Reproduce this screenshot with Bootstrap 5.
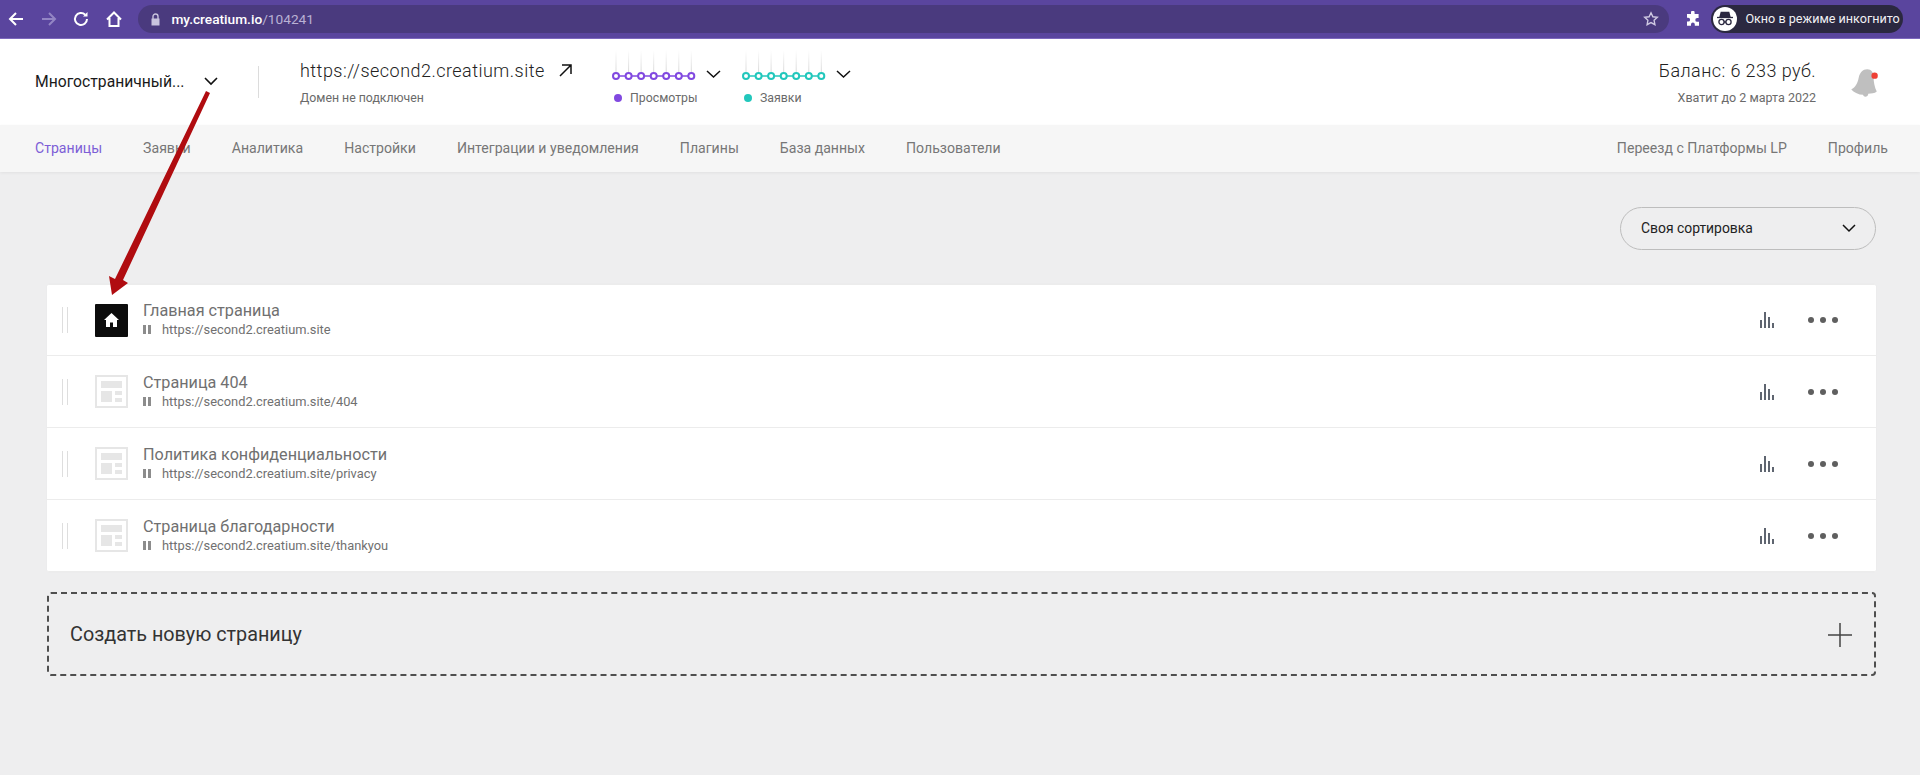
<!DOCTYPE html>
<html lang="ru">
<head>
<meta charset="utf-8">
<title>Страницы</title>
<link href="https://cdn.jsdelivr.net/npm/bootstrap@5.3.0/dist/css/bootstrap.min.css" rel="stylesheet">
<style>
html,body{height:775px;overflow:hidden}
body{background:#eeeeef;font-family:Roboto,"Liberation Sans",sans-serif;color:#111;position:relative}
.chrome-bar{height:39px;background:#5a459e;border-bottom:1px solid #7d68bd;padding:5px 16px 5px 0}
.tool-btn{width:32.6px;flex:none;display:flex;justify-content:center}
.omni{height:28px;width:1531px;margin-left:8px;background:#4a3a7e;border-radius:14px;padding:0 10px 0 12px;font-size:13.7px;color:#b9b1d4}
.omni b{font-weight:500;color:#fff}
.omni-lock{margin-right:10px}
.omni-star{margin-left:auto}
.incog{height:28px;width:192px;margin-left:10px;background:#2b2840;border-radius:14px;color:#f1f1f4;font-size:12.6px;padding-left:2px;white-space:nowrap}
.incog-ava{width:24px;height:24px;border-radius:50%;background:#fff;display:flex;align-items:center;justify-content:center;margin-right:8px;flex:none}
.top-head{height:86px;background:#fff;padding:0 41px 0 35px}
.proj-name{font-size:15.7px;width:183px;color:#1a1a1a}
.vline{width:1px;height:32px;background:#dcdcdc;margin:0 41px 0 40px}
.dom-box{width:311px}
.dom-url{font-size:18px;line-height:22px;font-weight:300;letter-spacing:.47px;color:#222;margin-bottom:9px}
.url-go{margin-left:14px}
.sub-text{font-size:12.3px;line-height:14px;color:#6a6a6a}
.stat-box{width:130px;margin-bottom:9px}
.stat-box svg{display:block}
.stat-leg{padding-left:3px;margin-top:5px}
.leg-dot{width:8px;height:8px;border-radius:50%;margin-right:8px}
.bal-box{text-align:right;margin-right:33px}
.bal-box .sub-text{font-size:12.5px}
.bal-main{font-size:18px;line-height:22px;font-weight:300;color:#222;margin-bottom:9px;letter-spacing:.42px}
.top-nav{height:47px;background:#f6f6f6;box-shadow:0 1px 3px rgba(0,0,0,.06);padding:0 32px 0 35px;font-size:14.1px}
.top-nav .nav-link{padding:0;color:#777;font-weight:400;white-space:nowrap}
.top-nav .nav-link.on{color:#7d5ed6}
.nav-gap{gap:41px}
.page-body{padding:35px 44px 0 47px}
.sort-pick{width:256px;height:43px;border:1px solid #bdbdbd;border-radius:22px;padding:0 19px 0 20px;font-size:13.9px;color:#222;margin-bottom:34px;margin-left:auto}
.page-list{border-radius:2px;--bs-list-group-border-color:#ececec;--bs-list-group-item-padding-x:0;--bs-list-group-item-padding-y:0;box-shadow:0 0 2px rgba(0,0,0,.03)}
.page-row{height:72px;display:flex;align-items:center;padding:0 38px 0 15px!important;border-left:0;border-right:0}
.drag{width:6px;height:26px;border-left:1px solid #dedede;border-right:1px solid #dedede;margin-right:27px;flex:none}
.pg-ico{width:33px;height:33px;flex:none;margin-right:15px;display:flex;align-items:center;justify-content:center;border-radius:1px}
.pg-ico.home{background:#0c0c0c}
.pg-txt{padding-bottom:2px}
.pg-title{font-size:16.2px;line-height:20px;color:#707070}
.pg-url{font-size:12.85px;line-height:15px;color:#707070;margin-top:1px}
.pause{width:8px;height:9px;border-left:3px solid #8c8c8c;border-right:3px solid #8c8c8c;margin-right:11px;flex:none}
.row-tools{margin-left:auto;gap:34px}
.more{display:flex;gap:6px}
.more i{display:block;width:6px;height:6px;border-radius:50%;background:#5f5f5f}
.add-box{height:84px;margin-top:20px;border:2px dashed #4f4f4f;border-radius:4px;padding:1px 22px 0 21px;font-size:19.8px;color:#333}
.ann{position:absolute;left:0;top:0;pointer-events:none}
</style>
</head>
<body>
<div class="chrome-bar d-flex align-items-center">
  <div class="tool-btn"><svg width="18" height="18" viewBox="0 0 18 18" fill="none" stroke="#fff" stroke-width="2"><path d="M16 9H3M9 3 3 9l6 6"/></svg></div>
  <div class="tool-btn"><svg width="18" height="18" viewBox="0 0 18 18" fill="none" stroke="#9385c4" stroke-width="2"><path d="M2 9h13M9 3l6 6-6 6"/></svg></div>
  <div class="tool-btn"><svg width="18" height="18" viewBox="0 0 18 18" fill="none" stroke="#fff" stroke-width="2"><path d="M15 9a6 6 0 1 1-1.800-4.300"/><path d="M15.500 2v4.500H11" fill="#fff" stroke="none"/></svg></div>
  <div class="tool-btn"><svg width="18" height="18" viewBox="0 0 18 18" fill="none" stroke="#fff" stroke-width="2"><path d="M2 9.500 9 2.500l7 7M4.500 8v8h9V8"/></svg></div>
  <div class="omni d-flex align-items-center">
    <svg class="omni-lock" width="11" height="13" viewBox="0 0 11 13"><path d="M1.500 5.500h8v7h-8z" fill="#c9c3de"/><path d="M3 6V3.500a2.500 2.500 0 0 1 5 0V6" fill="none" stroke="#c9c3de" stroke-width="1.400"/></svg>
    <span><b>my.creatium.io</b>/104241</span>
    <svg class="omni-star" width="16" height="16" viewBox="0 0 16 16" fill="none" stroke="#cfc9e2" stroke-width="1.400"><path d="m8 1.800 1.900 4 4.400.5-3.200 3 .8 4.400L8 11.600l-3.900 2.100.8-4.400-3.200-3 4.400-.5z"/></svg>
  </div>
  <svg class="ms-3" width="16" height="16" viewBox="0 0 16 16" fill="#fff"><path d="M6 1.500a1.800 1.800 0 0 1 3.600 0V3h4v4h-1.400a1.900 1.900 0 0 0 0 3.800H14v4H9.800v-1.300a1.900 1.900 0 0 0-3.800 0v1.300H2v-4.200h1.200a1.900 1.900 0 0 0 0-3.800H2V3h4z"/></svg>
  <div class="incog d-flex align-items-center">
    <span class="incog-ava"><svg width="18" height="16" viewBox="0 0 18 16" fill="none" stroke="#2b2840" stroke-width="1.300"><path d="M4 6 5.200 1.500h7.600L14 6z" fill="#2b2840"/><path d="M1 6.500h16"/><circle cx="5.500" cy="11" r="2.600"/><circle cx="12.500" cy="11" r="2.600"/><path d="M8 11h2"/></svg></span>
    <span>Окно в режиме инкогнито</span>
  </div>
</div>

<header class="top-head d-flex align-items-center">
  <div class="proj-name d-flex align-items-center justify-content-between">
    <span>Многостраничный...</span>
    <svg width="14" height="9" viewBox="0 0 14 9" fill="none" stroke="#111" stroke-width="1.600"><path d="m1 1 6 6 6-6"/></svg>
  </div>
  <div class="vline"></div>
  <div class="dom-box">
    <div class="dom-url d-flex align-items-center"><span>https://second2.creatium.site</span>
      <svg class="url-go" width="13" height="13" viewBox="0 0 13 13" fill="none" stroke="#111" stroke-width="1.500"><path d="M1 12 12 1M3 1h9v9"/></svg></div>
    <div class="sub-text">Домен не подключен</div>
  </div>
  <div class="stat-box">
    <svg width="115" height="36" viewBox="0 0 115 36" fill="none">
      <defs><linearGradient id="fadeline" gradientUnits="userSpaceOnUse" x1="0" y1="0" x2="0" y2="22"><stop offset="0" stop-color="#fff"/><stop offset="1" stop-color="#d8d8d8"/></linearGradient></defs>
      <g stroke="url(#fadeline)"><path d="M5 0v22M17.600 0v22M30.100 0v22M42.700 0v22M55.200 0v22M67.800 0v22M80.300 0v22"/></g>
      <path d="M5 26h75" stroke="#8149e0" stroke-width="1.600"/>
      <g fill="#fff" stroke="#8149e0" stroke-width="2"><circle cx="5" cy="26" r="3"/><circle cx="17.600" cy="26" r="3"/><circle cx="30.100" cy="26" r="3"/><circle cx="42.700" cy="26" r="3"/><circle cx="55.200" cy="26" r="3"/><circle cx="67.800" cy="26" r="3"/><circle cx="80.300" cy="26" r="3"/></g>
      <path d="m96 21 6.500 6 6.500-6" stroke="#111" stroke-width="1.500"/>
    </svg>
    <div class="stat-leg sub-text d-flex align-items-center"><span class="leg-dot" style="background:#8149e0"></span>Просмотры</div>
  </div>
  <div class="stat-box">
    <svg width="115" height="36" viewBox="0 0 115 36" fill="none">
      <g stroke="url(#fadeline)"><path d="M5 0v22M17.600 0v22M30.100 0v22M42.700 0v22M55.200 0v22M67.800 0v22M80.300 0v22"/></g>
      <path d="M5 26h75" stroke="#22c7bc" stroke-width="1.600"/>
      <g fill="#fff" stroke="#22c7bc" stroke-width="2"><circle cx="5" cy="26" r="3"/><circle cx="17.600" cy="26" r="3"/><circle cx="30.100" cy="26" r="3"/><circle cx="42.700" cy="26" r="3"/><circle cx="55.200" cy="26" r="3"/><circle cx="67.800" cy="26" r="3"/><circle cx="80.300" cy="26" r="3"/></g>
      <path d="m96 21 6.500 6 6.500-6" stroke="#111" stroke-width="1.500"/>
    </svg>
    <div class="stat-leg sub-text d-flex align-items-center"><span class="leg-dot" style="background:#22c7bc"></span>Заявки</div>
  </div>
  <div class="ms-auto d-flex align-items-center">
    <div class="bal-box">
      <div class="bal-main">Баланс: 6 233 руб.</div>
      <div class="sub-text">Хватит до 2 марта 2022</div>
    </div>
    <svg width="30" height="34" viewBox="0 0 28 32"><path d="M2 23c4-2 6-6 7-11 1-5 4-8 8-8s6 3 6 7c0 5 1 10 3 14-2 2-5 2-8 2 0 3-4 4-5 1-4 0-8-2-11-5z" fill="#bfbfbf"/><circle cx="24" cy="10" r="3" fill="#ee4035"/></svg>
  </div>
</header>

<nav class="top-nav d-flex align-items-center justify-content-between">
  <div class="nav nav-gap">
    <a class="nav-link on" href="#">Страницы</a>
    <a class="nav-link" href="#">Заявки</a>
    <a class="nav-link" href="#">Аналитика</a>
    <a class="nav-link" href="#">Настройки</a>
    <a class="nav-link" href="#">Интеграции и уведомления</a>
    <a class="nav-link" href="#">Плагины</a>
    <a class="nav-link" href="#">База данных</a>
    <a class="nav-link" href="#">Пользователи</a>
  </div>
  <div class="nav nav-gap">
    <a class="nav-link" href="#">Переезд с Платформы LP</a>
    <a class="nav-link" href="#">Профиль</a>
  </div>
</nav>

<main class="page-body">
  <div class="sort-pick d-flex align-items-center justify-content-between">
    <span>Своя сортировка</span>
    <svg width="14" height="9" viewBox="0 0 14 9" fill="none" stroke="#111" stroke-width="1.500"><path d="m1 1 6 6 6-6"/></svg>
  </div>
  <div class="list-group page-list">
    <div class="list-group-item page-row">
      <span class="drag"></span>
      <span class="pg-ico home"><svg width="15" height="14" viewBox="0 0 15 14" fill="#fff"><path d="M7.500 0 15 7h-2v7H9V9.500H6V14H2V7H0z"/></svg></span>
      <div class="pg-txt"><div class="pg-title">Главная страница</div><div class="pg-url d-flex align-items-center"><span class="pause"></span>https://second2.creatium.site</div></div>
      <div class="row-tools d-flex align-items-center">
        <svg width="14" height="16" viewBox="0 0 14 16" fill="#5f6570"><path d="M0 8h2v8H0zM4 0h2v16H4zM8 5h2v11H8zM12 11h2v5h-2z"/></svg>
        <span class="more"><i></i><i></i><i></i></span>
      </div>
    </div>
    <div class="list-group-item page-row">
      <span class="drag"></span>
      <span class="pg-ico"><svg width="33" height="33" viewBox="0 0 33 33"><path d="M1 1h31v31H1z" fill="#fff" stroke="#e6e6e6" stroke-width="2"/><path d="M6 6h21v7H6zM6 16h11v11H6zM20 16h7v4h-7zM20 23h7v4h-7z" fill="#e6e6e6"/></svg></span>
      <div class="pg-txt"><div class="pg-title">Страница 404</div><div class="pg-url d-flex align-items-center"><span class="pause"></span>https://second2.creatium.site/404</div></div>
      <div class="row-tools d-flex align-items-center">
        <svg width="14" height="16" viewBox="0 0 14 16" fill="#5f6570"><path d="M0 8h2v8H0zM4 0h2v16H4zM8 5h2v11H8zM12 11h2v5h-2z"/></svg>
        <span class="more"><i></i><i></i><i></i></span>
      </div>
    </div>
    <div class="list-group-item page-row">
      <span class="drag"></span>
      <span class="pg-ico"><svg width="33" height="33" viewBox="0 0 33 33"><path d="M1 1h31v31H1z" fill="#fff" stroke="#e6e6e6" stroke-width="2"/><path d="M6 6h21v7H6zM6 16h11v11H6zM20 16h7v4h-7zM20 23h7v4h-7z" fill="#e6e6e6"/></svg></span>
      <div class="pg-txt"><div class="pg-title">Политика конфиденциальности</div><div class="pg-url d-flex align-items-center"><span class="pause"></span>https://second2.creatium.site/privacy</div></div>
      <div class="row-tools d-flex align-items-center">
        <svg width="14" height="16" viewBox="0 0 14 16" fill="#5f6570"><path d="M0 8h2v8H0zM4 0h2v16H4zM8 5h2v11H8zM12 11h2v5h-2z"/></svg>
        <span class="more"><i></i><i></i><i></i></span>
      </div>
    </div>
    <div class="list-group-item page-row">
      <span class="drag"></span>
      <span class="pg-ico"><svg width="33" height="33" viewBox="0 0 33 33"><path d="M1 1h31v31H1z" fill="#fff" stroke="#e6e6e6" stroke-width="2"/><path d="M6 6h21v7H6zM6 16h11v11H6zM20 16h7v4h-7zM20 23h7v4h-7z" fill="#e6e6e6"/></svg></span>
      <div class="pg-txt"><div class="pg-title">Страница благодарности</div><div class="pg-url d-flex align-items-center"><span class="pause"></span>https://second2.creatium.site/thankyou</div></div>
      <div class="row-tools d-flex align-items-center">
        <svg width="14" height="16" viewBox="0 0 14 16" fill="#5f6570"><path d="M0 8h2v8H0zM4 0h2v16H4zM8 5h2v11H8zM12 11h2v5h-2z"/></svg>
        <span class="more"><i></i><i></i><i></i></span>
      </div>
    </div>
  </div>
  <div class="add-box d-flex align-items-center justify-content-between">
    <span>Создать новую страницу</span>
    <svg width="24" height="24" viewBox="0 0 24 24" stroke="#444" stroke-width="1.500"><path d="M12 0v24M0 12h24"/></svg>
  </div>
</main>

<svg class="ann" width="300" height="320" viewBox="0 0 300 320"><path d="M206 91 210 93 123 280l5 3-16 12-3-19 6 3z" fill="#b00c10"/></svg>
</body>
</html>
